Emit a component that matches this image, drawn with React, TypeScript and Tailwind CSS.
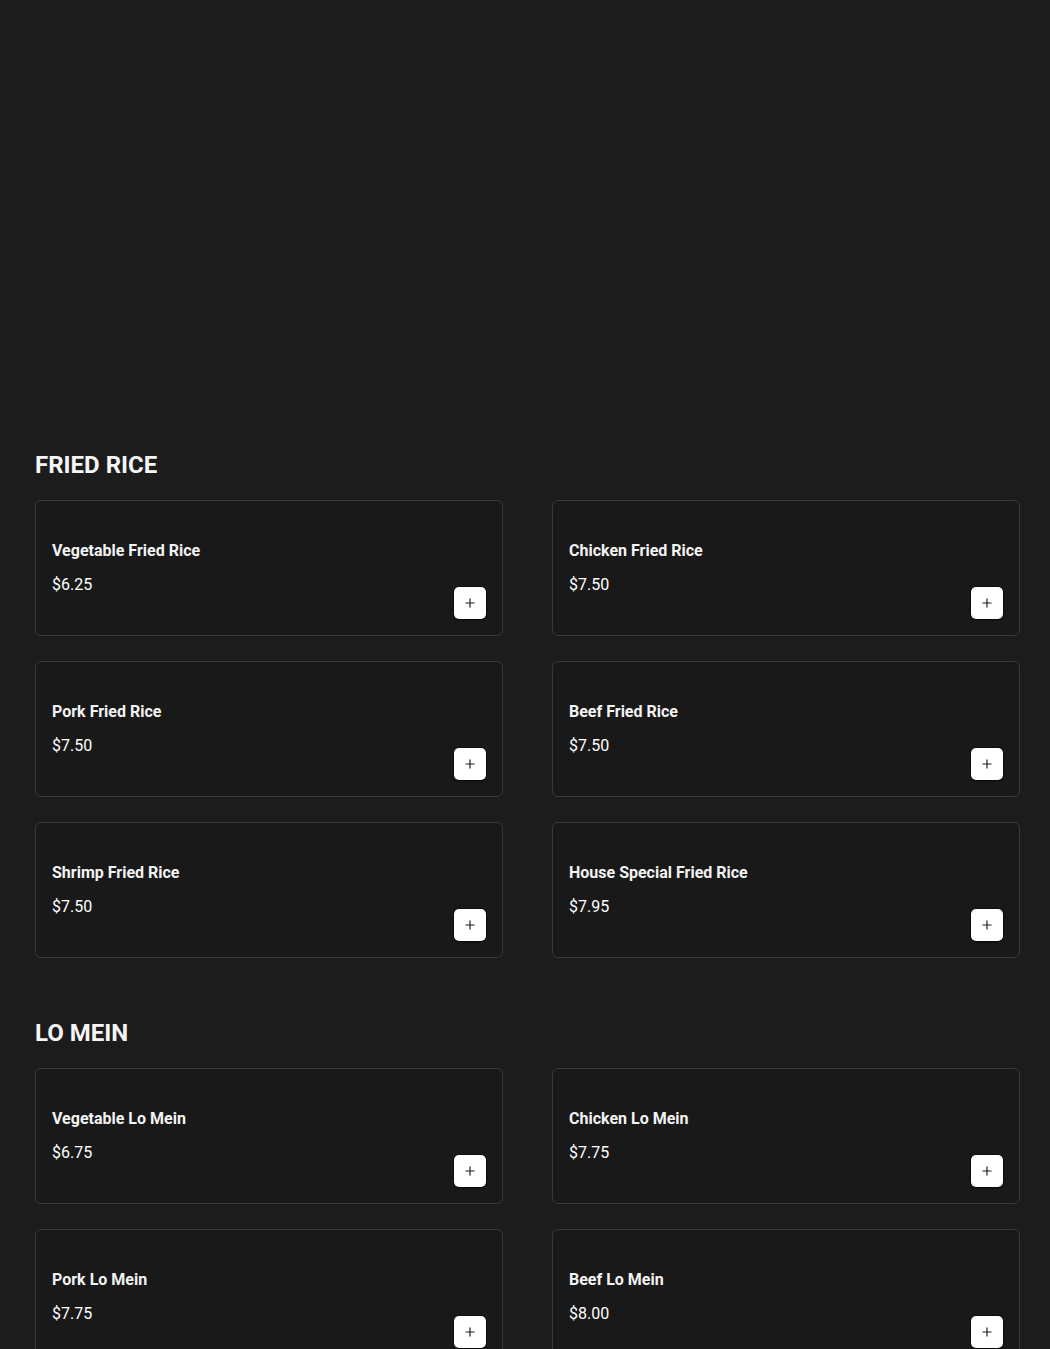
import { Plus } from "lucide-react";

interface Item {
  name: string;
  price: string;
}

const sections: { title: string; items: Item[] }[] = [
  {
    title: "FRIED RICE",
    items: [
      { name: "Vegetable Fried Rice", price: "$6.25" },
      { name: "Chicken Fried Rice", price: "$7.50" },
      { name: "Pork Fried Rice", price: "$7.50" },
      { name: "Beef Fried Rice", price: "$7.50" },
      { name: "Shrimp Fried Rice", price: "$7.50" },
      { name: "House Special Fried Rice", price: "$7.95" },
    ],
  },
  {
    title: "LO MEIN",
    items: [
      { name: "Vegetable Lo Mein", price: "$6.75" },
      { name: "Chicken Lo Mein", price: "$7.75" },
      { name: "Pork Lo Mein", price: "$7.75" },
      { name: "Beef Lo Mein", price: "$8.00" },
    ],
  },
];

function MenuCard({ item }: { item: Item }) {
  return (
    <div className="flex justify-between rounded-md border border-[#393939] bg-[#191919] p-4 h-[136px]">
      <div className="pt-[22px]">
        <h3 className="text-base leading-6 font-bold text-[#f3f3f3]">
          {item.name}
        </h3>
        <p className="mt-[10px] text-base leading-6 text-white">
          {item.price}
        </p>
      </div>
      <button className="self-end flex h-8 w-8 items-center justify-center rounded-[5px] bg-white text-[#1a1a1a] shadow-[0_0_0_1px_rgba(0,0,0,0.4),0_1px_2px_rgba(0,0,0,0.5)]">
        <Plus size={14} strokeWidth={2} />
      </button>
    </div>
  );
}

export default function App() {
  return (
    <div
      className="min-h-screen bg-[#1c1c1c] pl-[35px] pr-[30px] pb-10"
      style={{ fontFamily: "Roboto, 'Liberation Sans', sans-serif" }}
    >
      <div className="h-[449px]" />

      <div className="flex flex-col gap-[59px]">
        {sections.map((section) => (
          <section key={section.title}>
            <h2 className="mb-[19px] text-2xl leading-8 font-bold text-[#f5f5f5]">
              {section.title}
            </h2>

            <div className="grid grid-cols-2 gap-x-[49px] gap-y-[25px]">
              {section.items.map((item) => (
                <MenuCard key={item.name} item={item} />
              ))}
            </div>
          </section>
        ))}
      </div>
    </div>
  );
}
